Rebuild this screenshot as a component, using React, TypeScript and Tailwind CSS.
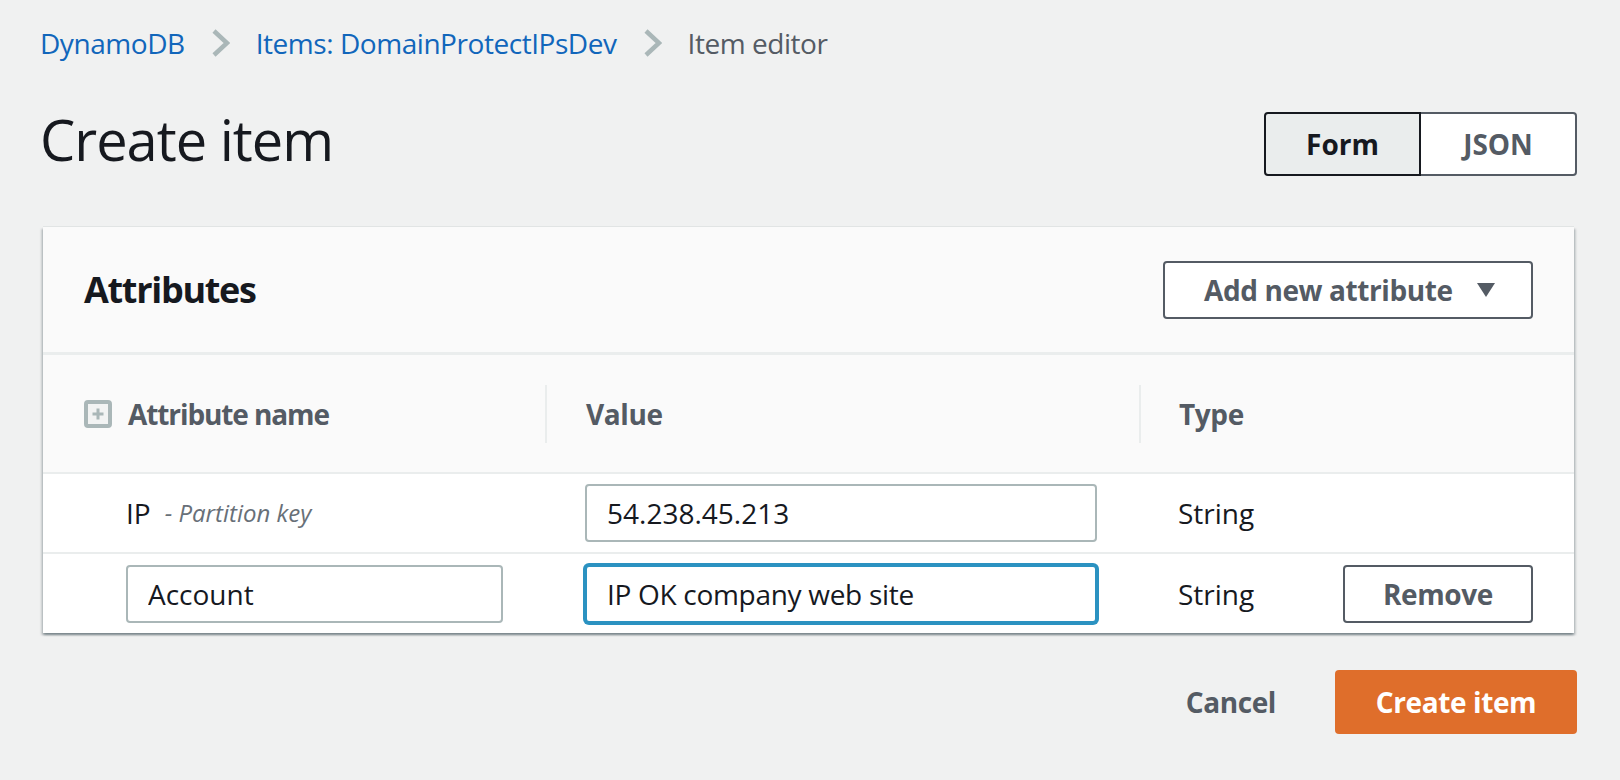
import React from 'react';

function Chevron() {
  return (
    <svg width="19" height="28" viewBox="0 0 19 28" className="shrink-0">
      <polyline points="3,2 16,14 3,26" fill="none" stroke="#aab7b8" strokeWidth="4.5" />
    </svg>
  );
}

function PlusSquare() {
  return (
    <svg width="28" height="28" viewBox="0 0 28 28" className="shrink-0">
      <rect x="2" y="2" width="24" height="24" rx="2" fill="#f2f3f3" stroke="#aab7b8" strokeWidth="4" />
      <path d="M14 8.5v11M8.5 14h11" stroke="#aab7b8" strokeWidth="3" />
    </svg>
  );
}

function Caret() {
  return (
    <svg width="18" height="14" viewBox="0 0 18 14" className="shrink-0">
      <polygon points="0,0 18,0 9,14" fill="#545b64" />
    </svg>
  );
}

export default function App() {
  return (
    <div className="min-h-screen bg-[#f0f1f1] pl-[40px] pr-[43px] pt-[23px] font-['Open_Sans',sans-serif]">
      {/* Breadcrumb */}
      <nav className="flex h-[40px] items-center text-[28px] leading-[40px] tracking-[-0.45px]">
        <a className="text-[#1166bb]">DynamoDB</a>
        <span className="mx-[26px]"><Chevron /></span>
        <a className="text-[#1166bb]">Items: DomainProtectIPsDev</a>
        <span className="mx-[26px]"><Chevron /></span>
        <span className="text-[#545b64]">Item editor</span>
      </nav>

      {/* Title row */}
      <div className="mt-[48px] flex items-start justify-between">
        <h1 className="text-[56px] leading-[56px] tracking-[-1px] text-[#16191f]">Create item</h1>
        <div className="mt-[1px] flex h-[64px]">
          <button className="flex w-[157px] items-center justify-center rounded-l-[4px] border-2 border-[#16191f] bg-[#eaeded] text-[28px] font-bold text-[#16191f]">
            Form
          </button>
          <button className="flex w-[156px] items-center justify-center rounded-r-[4px] border-y-2 border-r-2 border-[#545b64] bg-white text-[28px] font-bold text-[#545b64]">
            JSON
          </button>
        </div>
      </div>

      {/* Attributes panel */}
      <div className="mx-[3px] mt-[51px] bg-white shadow-[0_2px_2px_rgba(0,28,36,0.3),2px_2px_2px_rgba(0,28,36,0.15),-2px_2px_2px_rgba(0,28,36,0.15),0_-1px_0_rgba(0,28,36,0.06)]">
        <div className="flex h-[128px] items-center justify-between border-b-[3px] border-[#eaeded] bg-[#fafafa] px-[41px]">
          <h2 className="text-[36px] font-bold tracking-[-1.3px] text-[#16191f]">Attributes</h2>
          <button className="flex h-[58px] w-[370px] items-center justify-between rounded-[4px] border-2 border-[#545b64] bg-white pl-[39px] pr-[36px] text-[28px] font-bold tracking-[-0.4px] text-[#545b64]">
            <span>Add new attribute</span>
            <Caret />
          </button>
        </div>

        {/* Column headers */}
        <div className="grid h-[119px] grid-cols-[502px_594px_1fr] border-b-2 border-[#eaeded] bg-[#fafafa] text-[28px] font-bold tracking-[-0.4px] text-[#545b64]">
          <div className="flex items-center gap-[16px] pl-[41px]">
            <PlusSquare />
            <span className="tracking-[-1.1px]">Attribute name</span>
          </div>
          <div className="flex items-center">
            <span className="h-[58px] w-[2px] bg-[#eaeded]" />
            <span className="ml-[39px]">Value</span>
          </div>
          <div className="flex items-center">
            <span className="h-[58px] w-[2px] bg-[#eaeded]" />
            <span className="ml-[38px]">Type</span>
          </div>
        </div>

        {/* Row 1 */}
        <div className="grid h-[80px] grid-cols-[502px_594px_1fr] border-b-2 border-[#eaeded] text-[28px] text-[#16191f]">
          <div className="flex items-center pl-[83px] pr-[42px]">
            <span>IP</span>
            <span className="ml-[14px] text-[24px] italic text-[#687078]">- Partition key</span>
          </div>
          <div className="flex items-center pl-[40px] pr-[42px]">
            <input
              readOnly
              defaultValue="54.238.45.213"
              className="h-[58px] w-full rounded-[4px] border-2 border-[#aab7b8] bg-white px-[20px] text-[28px] text-[#16191f] outline-none"
            />
          </div>
          <div className="flex items-center pl-[39px] pr-[41px]">
            <span>String</span>
          </div>
        </div>

        {/* Row 2 */}
        <div className="grid h-[79px] grid-cols-[502px_594px_1fr] text-[28px] text-[#16191f]">
          <div className="flex items-center pl-[83px] pr-[42px]">
            <input
              readOnly
              defaultValue="Account"
              className="h-[58px] w-full rounded-[4px] border-2 border-[#aab7b8] bg-white px-[20px] text-[28px] text-[#16191f] outline-none"
            />
          </div>
          <div className="flex items-center pl-[40px] pr-[42px]">
            <input
              readOnly
              defaultValue="IP OK company web site"
              className="h-[58px] w-full rounded-[4px] border-2 border-[#2b92c1] bg-white px-[20px] text-[28px] tracking-[-0.3px] text-[#16191f] shadow-[0_0_0_2px_#2b92c1] outline-none"
            />
          </div>
          <div className="flex items-center justify-between pl-[39px] pr-[41px]">
            <span>String</span>
            <button className="flex h-[58px] w-[190px] items-center justify-center rounded-[4px] border-2 border-[#545b64] bg-white text-[28px] font-bold tracking-[-0.4px] text-[#545b64]">
              Remove
            </button>
          </div>
        </div>
      </div>

      {/* Actions */}
      <div className="mt-[37px] flex items-center justify-end gap-[59px]">
        <button className="text-[28px] font-bold tracking-[-0.4px] text-[#545b64]">Cancel</button>
        <button className="flex h-[64px] w-[242px] items-center justify-center rounded-[4px] bg-[#df6e2b] text-[28px] font-bold tracking-[-0.4px] text-white">
          Create item
        </button>
      </div>
    </div>
  );
}
